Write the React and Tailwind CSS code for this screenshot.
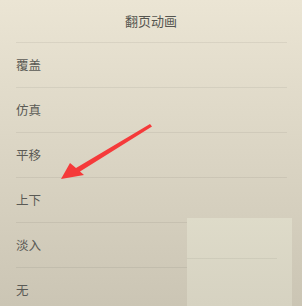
import React from "react";

const options = ["覆盖", "仿真", "平移", "上下", "淡入", "无"];

const App = () => {
  return (
    <div
      className="relative w-[302px] h-[306px] overflow-hidden bg-gradient-to-b from-[#ebe5d4] to-[#cbc5b4]"
      style={{ fontFamily: '"Noto Sans CJK SC", "Noto Sans", sans-serif' }}
    >
      <div className="h-[42px] flex items-center justify-center text-[13px] text-[#555550]">
        翻页动画
      </div>
      <div className="ml-4 mr-[15px]">
        {options.map((opt) => (
          <div
            key={opt}
            className="h-[45px] flex items-center border-t border-black/[0.06] text-[12.5px] text-[#5a5a55]"
          >
            {opt}
          </div>
        ))}
      </div>

      {/* watermark box */}
      <div className="absolute left-[187px] top-[218px] w-[105px] h-[88px] bg-gradient-to-b from-[#dedbc9] to-[#d6d2c1]">
        <div className="mt-[40px] w-[90px] border-t border-black/[0.05]" />
      </div>

      {/* red arrow */}
      <svg
        className="absolute left-0 top-0"
        width="302"
        height="306"
        viewBox="0 0 302 306"
      >
        <path
          d="M150 124 L152 126.5 L80 171.5 L84 175 L61 179 L70 163 L76 168 Z"
          fill="#f53a3a"
        />
      </svg>
    </div>
  );
};

export default App;
